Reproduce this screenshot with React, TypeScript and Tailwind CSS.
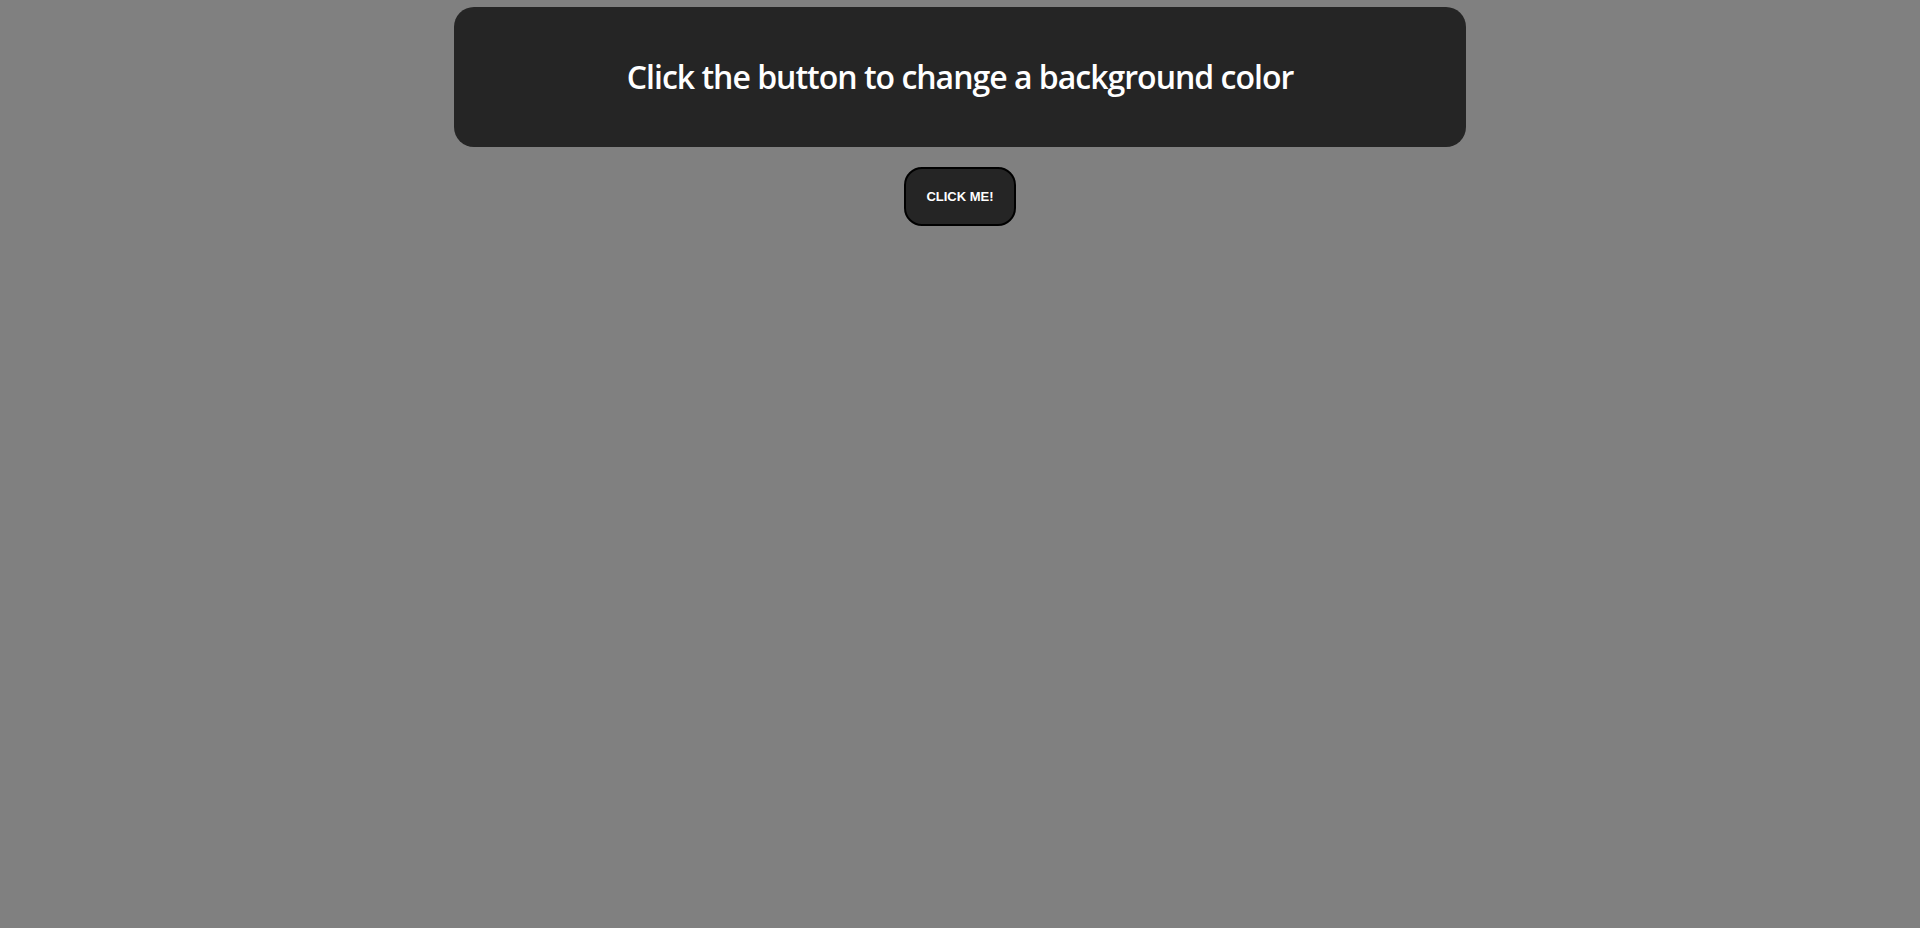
export default function App() {
  return (
    <div className="min-h-screen bg-[#808080] flex flex-col items-center pt-[7px]">
      <div className="w-[1012px] h-[140px] rounded-[20px] bg-[#252525] flex items-center justify-center">
        <h1 className="text-white text-[32px] font-semibold tracking-[-1px] font-['Open_Sans',sans-serif]">
          Click the button to change a background color
        </h1>
      </div>
      <button className="mt-5 px-5 py-[19px] leading-[17px] border-2 border-black rounded-[18px] bg-[#252525] text-white text-[13px] font-bold font-['Liberation_Sans',Arial,sans-serif]">
        CLICK ME!
      </button>
    </div>
  )
}
